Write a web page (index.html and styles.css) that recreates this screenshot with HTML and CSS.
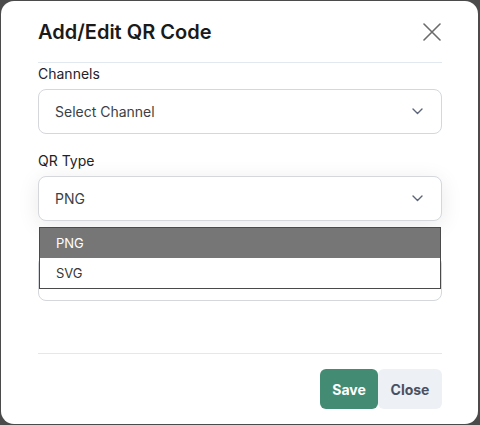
FILE: index.html
```html
<!DOCTYPE html>
<html>
<head>
<meta charset="utf-8">
<link rel="stylesheet" href="styles.css">
</head>
<body>
<div class="modal">
  <div class="modal-header">
    <h2 class="title">Add/Edit QR Code</h2>
    <button class="close-x" aria-label="Close">
      <svg width="18" height="18" viewBox="0 0 18 18"><path d="M1 1 L17 17 M17 1 L1 17" stroke="#6b6b6b" stroke-width="1.6" fill="none" stroke-linecap="round"/></svg>
    </button>
  </div>
  <div class="modal-body">
    <div class="field">
      <label class="label">Channels</label>
      <div class="select">
        <span>Select Channel</span>
        <svg class="chev" width="11" height="7" viewBox="0 0 11 7"><path d="M1 1 L5.5 5.5 L10 1" stroke="#5b6478" stroke-width="1.4" fill="none" stroke-linecap="round" stroke-linejoin="round"/></svg>
      </div>
    </div>
    <div class="field field-open">
      <label class="label">QR Type</label>
      <div class="select focused">
        <span>PNG</span>
        <svg class="chev" width="11" height="7" viewBox="0 0 11 7"><path d="M1 1 L5.5 5.5 L10 1" stroke="#5b6478" stroke-width="1.4" fill="none" stroke-linecap="round" stroke-linejoin="round"/></svg>
      </div>
      <ul class="options">
        <li class="option active">PNG</li>
        <li class="option">SVG</li>
      </ul>
    </div>
    <div class="select hidden-box"></div>
  </div>
  <div class="modal-footer">
    <button class="btn btn-save">Save</button>
    <button class="btn btn-close">Close</button>
  </div>
</div>
</body>
</html>
```
FILE: styles.css
```css
* { box-sizing: border-box; }
html, body { margin: 0; padding: 0; }
body {
  background: #4b4b4b;
  width: 480px;
  height: 425px;
  overflow: hidden;
  font-family: Inter, "Noto Sans", sans-serif;
  padding: 1px 2px 1px 1px;
}
.modal {
  background: #ffffff;
  width: 477px;
  height: 423px;
  border-radius: 13px;
  padding: 0 36px 0 37px;
  display: flex;
  flex-direction: column;
}
.modal-header {
  display: flex;
  align-items: center;
  justify-content: space-between;
  padding: 17px 0 16px;
  border-bottom: 1px solid #e2e8f0;
}
.title {
  margin: 0;
  font-size: 20px;
  line-height: 28px;
  font-weight: 600;
  color: #1a1a1a;
}
.close-x {
  background: none;
  border: 0;
  padding: 0;
  margin-right: 1px;
  width: 18px;
  height: 18px;
  display: flex;
}
.modal-body {
  padding-top: 1px;
  display: flex;
  flex-direction: column;
  height: 291px;
  border-bottom: 1px solid #e2e8f0;
}
.field {
  display: flex;
  flex-direction: column;
  gap: 5px;
  margin-bottom: 17px;
}
.field-open { position: relative; margin-bottom: 35px; }
.label {
  font-size: 14px;
  line-height: 20px;
  color: #1f2328;
}
.select {
  height: 45px;
  border: 1px solid #d4d7dc;
  border-radius: 8px;
  display: flex;
  align-items: center;
  justify-content: space-between;
  padding: 0 18px 0 16px;
  font-size: 14px;
  color: #3b3f46;
  background: #fff;
}
.focused {
  box-shadow: 0 4px 22px rgba(0, 0, 0, 0.09);
}
.chev { display: block; }
.options {
  position: absolute;
  left: 1px;
  right: 1px;
  top: 76px;
  margin: 0;
  padding: 0;
  list-style: none;
  border: 1px solid #4a4a4a;
  background: #fff;
  z-index: 2;
}
.option {
  height: 30px;
  line-height: 30px;
  padding-left: 16px;
  font-size: 13px;
  color: #3a3632;
}
.option.active {
  background: #767676;
  color: #ffffff;
}
.hidden-box { flex: none; }
.modal-footer {
  display: flex;
  justify-content: flex-end;
  padding-top: 15px;
}
.btn {
  height: 40px;
  border: 0;
  border-radius: 6px;
  font-family: Inter, "Noto Sans", sans-serif;
  font-size: 14px;
  font-weight: 700;
  padding: 0;
}
.btn-save {
  width: 58px;
  background: #438b73;
  color: #ffffff;
}
.btn-close {
  width: 64px;
  background: #edf0f5;
  color: #4a5060;
}
```
